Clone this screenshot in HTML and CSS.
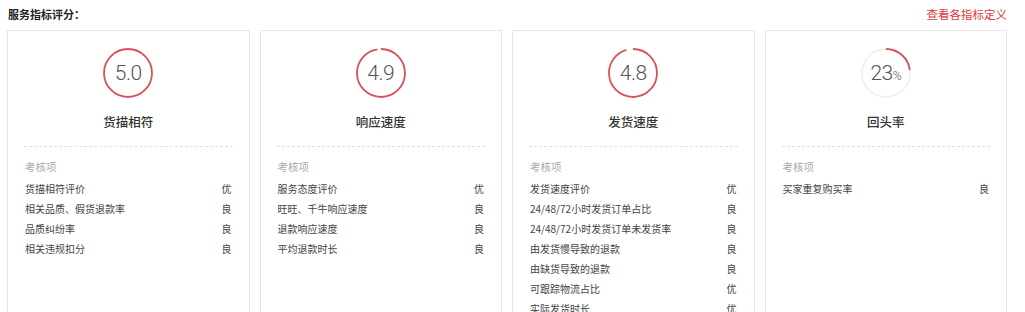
FILE: index.html
```html
<!DOCTYPE html>
<html lang="zh-CN">
<head>
	<meta charset="UTF-8">
	<title>服务指标评分</title>
	<link rel="stylesheet" href="styles.css">
</head>
<body>
	<div class="wrap">
		<div class="head">
			<span class="head-title">服务指标评分：</span>
			<a class="head-link" href="#">查看各指标定义</a>
		</div>
		<ul class="cards">
			<!-- 货描相符 -->
			<li class="card">
				<div class="ring">
					<svg viewBox="0 0 50 50" width="50" height="50"><circle class="ring-bar" cx="25" cy="25" r="24" pathLength="100" stroke-dasharray="100 0" transform="rotate(-90 25 25)"/></svg>
					<span class="ring-num">5.0</span>
				</div>
				<h3 class="card-title">货描相符</h3>
				<div class="card-body">
					<p class="label">考核项</p>
					<ul class="items">
						<li><span>货描相符评价</span><span>优</span></li>
						<li><span>相关品质、假货退款率</span><span>良</span></li>
						<li><span>品质纠纷率</span><span>良</span></li>
						<li><span>相关违规扣分</span><span>良</span></li>
					</ul>
				</div>
			</li>
			<!-- 响应速度 -->
			<li class="card">
				<div class="ring">
					<svg viewBox="0 0 50 50" width="50" height="50"><circle class="ring-bar" cx="25" cy="25" r="24" pathLength="100" stroke-dasharray="97.5 100" transform="rotate(-90 25 25)"/></svg>
					<span class="ring-num">4.9</span>
				</div>
				<h3 class="card-title">响应速度</h3>
				<div class="card-body">
					<p class="label">考核项</p>
					<ul class="items">
						<li><span>服务态度评价</span><span>优</span></li>
						<li><span>旺旺、千牛响应速度</span><span>良</span></li>
						<li><span>退款响应速度</span><span>良</span></li>
						<li><span>平均退款时长</span><span>良</span></li>
					</ul>
				</div>
			</li>
			<!-- 发货速度 -->
			<li class="card">
				<div class="ring">
					<svg viewBox="0 0 50 50" width="50" height="50"><circle class="ring-bar" cx="25" cy="25" r="24" pathLength="100" stroke-dasharray="95.5 100" transform="rotate(-90 25 25)"/></svg>
					<span class="ring-num">4.8</span>
				</div>
				<h3 class="card-title">发货速度</h3>
				<div class="card-body">
					<p class="label">考核项</p>
					<ul class="items">
						<li><span>发货速度评价</span><span>优</span></li>
						<li><span>24/48/72小时发货订单占比</span><span>良</span></li>
						<li><span>24/48/72小时发货订单未发货率</span><span>良</span></li>
						<li><span>由发货慢导致的退款</span><span>良</span></li>
						<li><span>由缺货导致的退款</span><span>良</span></li>
						<li><span>可跟踪物流占比</span><span>优</span></li>
						<li><span>实际发货时长</span><span>优</span></li>
					</ul>
				</div>
			</li>
			<!-- 回头率 -->
			<li class="card">
				<div class="ring">
					<svg viewBox="0 0 50 50" width="50" height="50"><circle class="ring-bg" cx="25" cy="25" r="24"/><circle class="ring-bar" cx="25" cy="25" r="24" pathLength="100" stroke-dasharray="23 100" transform="rotate(-90 25 25)"/></svg>
					<span class="ring-num">23<small>%</small></span>
				</div>
				<h3 class="card-title">回头率</h3>
				<div class="card-body">
					<p class="label">考核项</p>
					<ul class="items">
						<li><span>买家重复购买率</span><span>良</span></li>
					</ul>
				</div>
			</li>
		</ul>
	</div>
</body>
</html>
```

FILE: styles.css
```css
/*css reset*/
html,body,div,ul,li,h3,p{
	padding: 0;
	margin: 0;
}
body{
	background: #fff;
	color: #333;
	font: 11px/20px "Noto Sans CJK SC", sans-serif;
	overflow: hidden;
}
ul{list-style-type: none;}
a{text-decoration: none;}

/*head*/
.wrap{
	padding: 4px 18px 0 7px;
}
.head{
	display: flex;
	justify-content: space-between;
	align-items: center;
	height: 20px;
	margin-bottom: 6px;
}
.head-title{
	font-weight: bold;
	color: #222;
	padding-left: 1px;
}
.head-link{
	color: #e1353a;
	font-size: 11.5px;
}

/*cards*/
.cards{
	display: grid;
	grid-template-columns: repeat(4, 1fr);
	gap: 10px;
}
.card{
	height: 320px;
	border: 1px solid #e6e6e6;
	padding: 17px 16px 0 16px;
}
.ring{
	width: 50px;
	height: 50px;
	margin: 0 auto;
	position: relative;
}
.ring svg{display: block;}
.ring-bg,.ring-bar{
	fill: none;
	stroke-width: 1.8;
}
.ring-bg{stroke: #f0f0f0;}
.ring-bar{stroke: #d6525a;}
.ring-num{
	position: absolute;
	top: 0;
	left: 0;
	right: 0;
	text-align: center;
	font: 300 21px/50px Roboto, sans-serif;
	color: #555;
	letter-spacing: -0.5px;
}
.ring-num small{
	font-size: 12px;
}
.card-title{
	margin-top: 14px;
	text-align: center;
	font-size: 12.5px;
	font-weight: 500;
	color: #333;
	line-height: 20px;
	padding-bottom: 14px;
	border-bottom: 1px dashed #e0e0e0;
}
.card-body{
	padding: 10px 0 0 1px;
}
.label{
	color: #aaa;
	font-size: 10.5px;
	margin-bottom: 2px;
}
.items li{
	display: flex;
	justify-content: space-between;
	font-size: 10px;
	color: #444;
	padding-right: 1px;
}
```
